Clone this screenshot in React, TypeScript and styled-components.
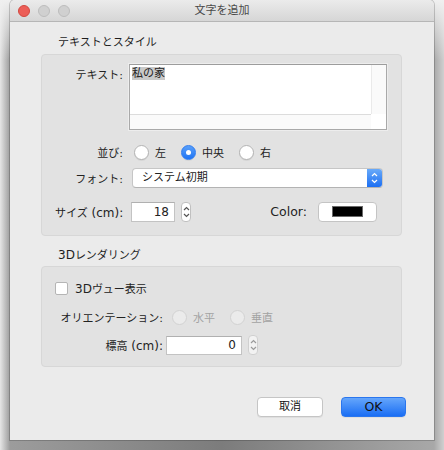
import React from 'react';
import styled, { createGlobalStyle } from 'styled-components';

const GlobalStyle = createGlobalStyle`
  html, body {
    margin: 0;
    padding: 0;
    background: #f0f0f0;
  }
  body {
    font-family: "DejaVu Sans", "Noto Sans CJK JP", sans-serif;
    font-size: 11px;
    color: #222;
    overflow: hidden;
  }
`;

function Chevrons({ color = '#555' }: { color?: string }) {
  return (
    <svg width="7" height="14" viewBox="0 0 7 14">
      <path d="M1 5 L3.5 2.5 L6 5" fill="none" stroke={color} strokeWidth="1.2" />
      <path d="M1 9 L3.5 11.5 L6 9" fill="none" stroke={color} strokeWidth="1.2" />
    </svg>
  );
}

export default function App() {
  return (
    <Stage>
      <GlobalStyle />
      <Window>
        <TitleBar>
          <Lights>
            <Light $color="#ec5e57" $border="#d1483f" />
            <Light $color="#d0d0d0" $border="#bcbcbc" />
            <Light $color="#d0d0d0" $border="#bcbcbc" />
          </Lights>
          <Title>文字を追加</Title>
        </TitleBar>

        <Section>
          <SectionTitle $mt={13}>テキストとスタイル</SectionTitle>
          <Panel $pt={9} $pb={13}>
            <Row>
              <Label $w={68} $top>テキスト:</Label>
              <TextArea>
                <TextBody>
                  <Selected>私の家</Selected>
                </TextBody>
                <VScroll />
                <HScroll />
              </TextArea>
            </Row>

            <Row $mt={11} $h={22}>
              <Label $w={68}>並び:</Label>
              <RadioGroup>
                <RadioItem>
                  <Radio />
                  左
                </RadioItem>
                <RadioItem>
                  <Radio $checked />
                  中央
                </RadioItem>
                <RadioItem>
                  <Radio />
                  右
                </RadioItem>
              </RadioGroup>
            </Row>

            <Row $mt={5} $h={20}>
              <Label $w={68}>フォント:</Label>
              <Select>
                <SelectText>システム初期</SelectText>
                <SelectArrow>
                  <Chevrons color="#fff" />
                </SelectArrow>
              </Select>
            </Row>

            <Row $mt={13} $h={21}>
              <Label $w={68}>
                サイズ<Lat> (cm):</Lat>
              </Label>
              <NumberField $w={44}>18</NumberField>
              <Stepper>
                <Chevrons />
              </Stepper>
              <ColorLabel>Color:</ColorLabel>
              <ColorWell>
                <Swatch />
              </ColorWell>
            </Row>
          </Panel>

          <SectionTitle $mt={11}>
            <Lat>3D</Lat>レンダリング
          </SectionTitle>
          <Panel $pt={13} $pb={11}>
            <Row $h={16}>
              <Checkbox />
              <CheckText>
                <Lat>3D</Lat>ヴュー表示
              </CheckText>
            </Row>
            <Row $mt={12} $h={18}>
              <Label $w={108} $gap={6}>オリエンテーション:</Label>
              <RadioGroup>
                <RadioItem $disabled>
                  <Radio $disabled />
                  水平
                </RadioItem>
                <RadioItem $disabled>
                  <Radio $disabled />
                  垂直
                </RadioItem>
              </RadioGroup>
            </Row>
            <Row $mt={9} $h={20}>
              <Label $w={108} $gap={3}>
                標高<Lat> (cm):</Lat>
              </Label>
              <NumberField $w={76} $h={19}>0</NumberField>
              <Stepper $disabled>
                <Chevrons color="#9a9a9a" />
              </Stepper>
            </Row>
          </Panel>
        </Section>

        <Footer>
          <Button>取消</Button>
          <Button $primary>OK</Button>
        </Footer>
      </Window>
    </Stage>
  );
}

const Stage = styled.div`
  width: 444px;
  height: 450px;
  padding-left: 10px;
  box-sizing: border-box;
  overflow: hidden;
  background:
    linear-gradient(#f0f0f0 0px, rgba(240, 240, 240, 0) 60px),
    linear-gradient(to right, #e6e6e6 0px, #9c9c9c 10px, #7c7c7c 50%, #a8a8a8 434px, #d0d0d0 444px);
`;

const Lat = styled.span`
  font-size: 12px;
`;

const Window = styled.div`
  width: 424px;
  height: 440px;
  background: #ebebeb;
  border-radius: 5px 5px 0 0;
  box-shadow: 0 0 0 1px rgba(0, 0, 0, 0.18);
  display: flex;
  flex-direction: column;
  overflow: hidden;
`;

const TitleBar = styled.div`
  position: relative;
  height: 21px;
  flex: none;
  background: linear-gradient(#ebebeb, #d6d6d6);
  border-bottom: 1px solid #b6b6b6;
  display: flex;
  align-items: center;
  justify-content: center;
`;

const Lights = styled.div`
  position: absolute;
  left: 8px;
  top: 5px;
  display: flex;
  gap: 8px;
`;

const Light = styled.span<{ $color: string; $border: string }>`
  width: 12px;
  height: 12px;
  box-sizing: border-box;
  border-radius: 50%;
  background: ${(p) => p.$color};
  border: 1px solid ${(p) => p.$border};
`;

const Title = styled.div`
  font-size: 11px;
  color: #4a4a4a;
  line-height: 21px;
`;

const Section = styled.div`
  margin: 0 32px 0 31px;
  display: flex;
  flex-direction: column;
`;

const SectionTitle = styled.div<{ $mt: number }>`
  margin-top: ${(p) => p.$mt}px;
  margin-bottom: 3px;
  padding-left: 17px;
  height: 16px;
  line-height: 16px;
  color: #1e1e1e;
`;

const Panel = styled.div<{ $pt: number; $pb: number }>`
  background: #e2e2e2;
  border: 1px solid #d7d7d7;
  border-radius: 4px;
  padding: ${(p) => p.$pt}px 14px ${(p) => p.$pb}px 13px;
  display: flex;
  flex-direction: column;
`;

const Row = styled.div<{ $mt?: number; $h?: number }>`
  display: flex;
  align-items: ${(p) => (p.$h ? 'center' : 'flex-start')};
  margin-top: ${(p) => p.$mt ?? 0}px;
  height: ${(p) => (p.$h ? `${p.$h}px` : 'auto')};
`;

const Label = styled.div<{ $w: number; $gap?: number; $top?: boolean }>`
  width: ${(p) => p.$w}px;
  flex: none;
  text-align: right;
  margin-right: ${(p) => p.$gap ?? 8}px;
  margin-top: ${(p) => (p.$top ? '2px' : '0')};
  white-space: nowrap;
  color: #222;
`;

const TextArea = styled.div`
  margin-left: -2px;
  width: 258px;
  height: 66px;
  box-sizing: border-box;
  border: 1px solid #a9a9a9;
  border-top-color: #9c9c9c;
  box-shadow: 0 0 0 1px #ededed;
  background: #fff;
  display: grid;
  grid-template-columns: 1fr 15px;
  grid-template-rows: 1fr 15px;
`;

const TextBody = styled.div`
  padding: 1px 2px;
  line-height: 15px;
`;

const Selected = styled.span`
  background: #c9c9c9;
`;

const VScroll = styled.div`
  background: #fafafa;
  border-left: 1px solid #eaeaea;
`;

const HScroll = styled.div`
  grid-column: 1 / 2;
  background: #fafafa;
  border-top: 1px solid #dcdcdc;
`;

const RadioGroup = styled.div`
  display: flex;
  gap: 15px;
  margin-left: 3px;
`;

const RadioItem = styled.label<{ $disabled?: boolean }>`
  display: flex;
  align-items: center;
  gap: 6px;
  color: ${(p) => (p.$disabled ? '#a3a3a3' : '#222')};
`;

const Radio = styled.span<{ $checked?: boolean; $disabled?: boolean }>`
  width: 15px;
  height: 15px;
  box-sizing: border-box;
  border-radius: 50%;
  display: flex;
  align-items: center;
  justify-content: center;
  background: ${(p) =>
    p.$checked ? 'linear-gradient(#5aa0fa, #1f74f4)' : p.$disabled ? '#ebebeb' : '#fff'};
  border: 1px solid ${(p) => (p.$checked ? '#2f7cf0' : p.$disabled ? '#d2d2d2' : '#b3b3b3')};
  box-shadow: ${(p) => (p.$disabled ? 'none' : '0 1px 0 rgba(0,0,0,0.06)')};

  &::after {
    content: '';
    display: ${(p) => (p.$checked ? 'block' : 'none')};
    width: 5px;
    height: 5px;
    border-radius: 50%;
    background: #fff;
  }
`;

const Select = styled.div`
  margin-left: 1px;
  width: 251px;
  height: 20px;
  box-sizing: border-box;
  background: #fff;
  border: 1px solid #c6c6c6;
  border-bottom-color: #b3b3b3;
  border-radius: 4px;
  display: flex;
  align-items: stretch;
  overflow: hidden;
`;

const SelectText = styled.div`
  flex: 1;
  padding-left: 9px;
  line-height: 18px;
`;

const SelectArrow = styled.div`
  width: 15px;
  background: linear-gradient(#69aaf9, #1c6ff3);
  display: flex;
  align-items: center;
  justify-content: center;
`;

const NumberField = styled.div<{ $w: number; $h?: number }>`
  width: ${(p) => p.$w}px;
  height: ${(p) => p.$h ?? 20}px;
  box-sizing: border-box;
  background: #fff;
  border: 1px solid #c3c3c3;
  border-top-color: #b0b0b0;
  text-align: right;
  padding-right: 5px;
  line-height: ${(p) => (p.$h ?? 20) - 2}px;
  font-size: 12px;
  color: #222;
`;

const Stepper = styled.div<{ $disabled?: boolean }>`
  margin-left: 6px;
  width: 10px;
  height: 20px;
  box-sizing: border-box;
  border: 1px solid ${(p) => (p.$disabled ? '#d0d0d0' : '#c0c0c0')};
  border-radius: 4px;
  background: ${(p) => (p.$disabled ? '#f2f2f2' : '#fff')};
  display: flex;
  align-items: center;
  justify-content: center;
`;

const ColorLabel = styled.div`
  margin-left: auto;
  margin-right: 11px;
  font-size: 12.5px;
`;

const ColorWell = styled.div`
  margin-right: 10px;
  width: 59px;
  height: 20px;
  box-sizing: border-box;
  background: #fff;
  border: 1px solid #c4c4c4;
  border-radius: 4px;
  display: flex;
  align-items: center;
  justify-content: center;
`;

const Swatch = styled.div`
  width: 31px;
  height: 11px;
  background: #000;
  border: 1px solid #6a6a6a;
  box-sizing: border-box;
`;

const Checkbox = styled.span`
  width: 13px;
  height: 13px;
  box-sizing: border-box;
  background: #fff;
  border: 1px solid #b5b5b5;
  border-radius: 2px;
`;

const CheckText = styled.span`
  margin-left: 7px;
`;

const Footer = styled.div`
  margin-top: 30px;
  padding-right: 28px;
  display: flex;
  justify-content: flex-end;
  gap: 18px;
`;

const Button = styled.div<{ $primary?: boolean }>`
  width: ${(p) => (p.$primary ? 65 : 66)}px;
  height: 20px;
  box-sizing: border-box;
  border-radius: 4px;
  text-align: center;
  line-height: 18px;
  font-size: ${(p) => (p.$primary ? '12.5px' : '11px')};
  color: #111;
  background: ${(p) => (p.$primary ? 'linear-gradient(#65a6fb, #1a6ef4)' : '#fff')};
  border: 1px solid ${(p) => (p.$primary ? '#2a76ee' : '#c5c5c5')};
  box-shadow: 0 1px 0 rgba(0, 0, 0, 0.05);
`;
